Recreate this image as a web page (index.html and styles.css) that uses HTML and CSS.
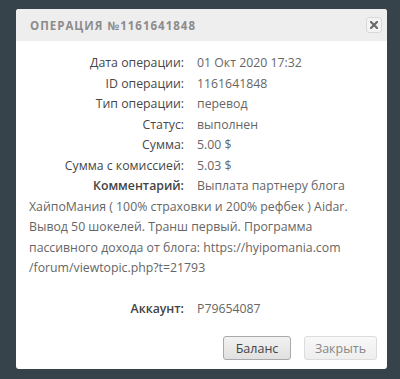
FILE: index.html
```html
<!DOCTYPE html>
<html lang="ru">
<head>
<meta charset="utf-8">
<link rel="stylesheet" href="styles.css">
</head>
<body>
<div class="dialog">
  <div class="header">
    <div class="title">Операция №1161641848</div>
    <button class="close" type="button" aria-label="Закрыть">
      <svg width="8" height="8" viewBox="0 0 8 8"><path d="M1 1L7 7M7 1L1 7" stroke="#6a6a6a" stroke-width="2.2" stroke-linecap="square"/></svg>
    </button>
  </div>
  <div class="content">
    <div class="row"><span class="label">Дата операции:</span>01 Окт 2020 17:32</div>
    <div class="row"><span class="label">ID операции:</span>1161641848</div>
    <div class="row"><span class="label">Тип операции:</span>перевод</div>
    <div class="row"><span class="label">Статус:</span>выполнен</div>
    <div class="row"><span class="label">Сумма:</span>5.00 $</div>
    <div class="row"><span class="label">Сумма с комиссией:</span>5.03 $</div>
    <div class="row"><span class="label label-strong">Комментарий:</span>Выплата партнеру блога<br>ХайпоМания ( 100% страховки и 200% рефбек ) Aidar.<br>Вывод 50 шокелей. Транш первый. Программа<br>пассивного дохода от блога: https://hyipomania.com<br>/forum/viewtopic.php?t=21793</div>
    <div class="row account"><span class="label label-strong">Аккаунт:</span>P79654087</div>
  </div>
  <div class="footer">
    <button class="btn btn-primary" type="button">Баланс</button>
    <button class="btn btn-secondary" type="button">Закрыть</button>
  </div>
</div>
</body>
</html>
```

FILE: styles.css
```css
html, body {
  margin: 0;
  height: 100%;
}
body {
  background: #37434b;
  padding: 9px 0 0 16px;
  box-sizing: border-box;
  font-family: "Open Sans", "DejaVu Sans", sans-serif;
}
.dialog {
  width: 371px;
  height: 360px;
  background: #fff;
  border-radius: 3px;
  overflow: hidden;
  display: flex;
  flex-direction: column;
}
.header {
  height: 32px;
  background: #eeeeee;
  display: flex;
  align-items: center;
  justify-content: space-between;
  padding: 0 5px 0 14px;
}
.title {
  text-transform: uppercase;
  color: #8c8c8c;
  font-size: 11.5px;
  font-weight: 700;
  letter-spacing: 1px;
}
.close {
  width: 16px;
  height: 16px;
  padding: 0;
  border: 1px solid #d9d9d9;
  border-radius: 3px;
  background: #f3f3f3;
  display: flex;
  align-items: center;
  justify-content: center;
}
.content {
  padding: 12px 6px 0 13px;
  flex: 1;
  color: #666;
  font-size: 12.3px;
  line-height: 20.5px;
}
.label {
  display: inline-block;
  width: 155px;
  margin-right: 13px;
  text-align: right;
  color: #474747;
}
.label-strong {
  font-weight: 600;
  color: #444;
}
.account {
  margin-top: 20.5px;
}
.footer {
  display: flex;
  justify-content: flex-end;
  gap: 13px;
  padding: 0 10px 9px 0;
}
.btn {
  height: 24px;
  padding: 0;
  border-radius: 3px;
  font-family: inherit;
  font-size: 12.5px;
}
.btn-primary {
  width: 68px;
  border: 1px solid #a9a9a9;
  background: linear-gradient(#f2f2f2, #e0e0e0);
  color: #444;
}
.btn-secondary {
  width: 73px;
  border: 1px solid #dcdcdc;
  background: linear-gradient(#f8f8f8, #eeeeee);
  color: #888;
}
```
